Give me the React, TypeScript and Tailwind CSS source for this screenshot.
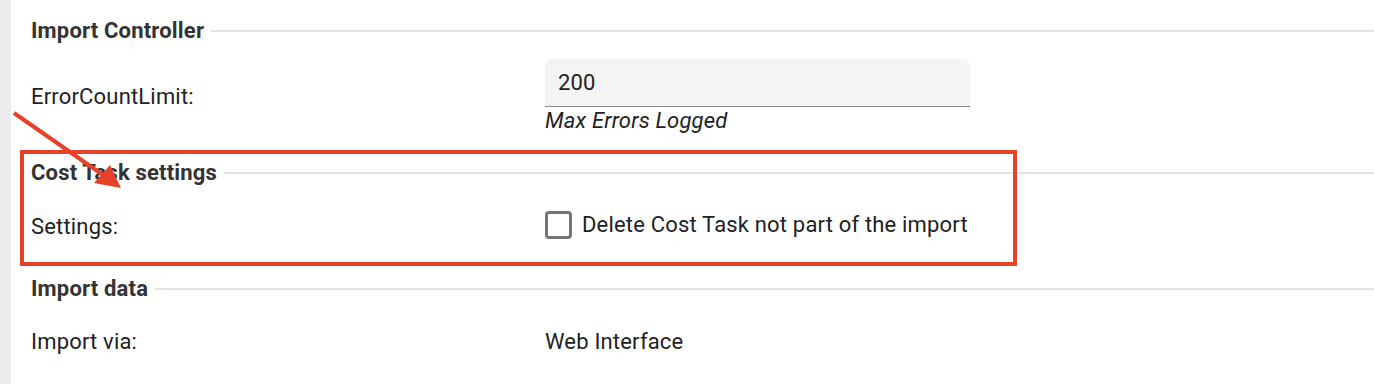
import React from 'react';

const SectionHeading = ({ title, className = '' }: { title: string; className?: string }) => (
  <div className={`flex items-center ${className}`}>
    <span className="text-[22px] leading-[28px] font-bold text-[#333333] whitespace-nowrap">{title}</span>
    <div className="flex-1 h-[2px] bg-[#e3e3e3] ml-[7px]" />
  </div>
);

const App = () => {
  return (
    <div
      className="relative flex w-full h-[384px] bg-white overflow-hidden tracking-[0.18px]"
      style={{ fontFamily: 'Roboto, "Liberation Sans", sans-serif' }}
    >
      {/* left gutter */}
      <div className="w-[11px] bg-[#ececec] shrink-0" />

      <div className="flex-1 pl-[20px] pt-[17px] text-[#222222]">
        <SectionHeading title="Import Controller" />

        {/* ErrorCountLimit */}
        <div className="grid grid-cols-[514px_1fr]">
          <div className="mt-[38px] text-[22px] leading-[28px]">ErrorCountLimit:</div>
          <div className="mt-[14px]">
            <div className="w-[425px] h-[48px] bg-[#f4f4f4] rounded-t-[6px] border-b border-[#8a8a8a] flex items-center px-[13px] text-[22px]">
              200
            </div>
            <div className="mt-[2px] text-[22px] leading-[24px] italic">Max Errors Logged</div>
          </div>
        </div>

        <SectionHeading title="Cost Task settings" className="mt-[26px]" />

        {/* Settings */}
        <div className="grid grid-cols-[514px_1fr] mt-[22px] items-center">
          <div className="text-[22px] leading-[28px] pt-[4px]">Settings:</div>
          <label className="flex items-center">
            <span className="w-[27px] h-[28px] border-[3px] border-[#767676] rounded-[4px] bg-white" />
            <span className="ml-[10px] text-[22px] leading-[28px]">Delete Cost Task not part of the import</span>
          </label>
        </div>

        <SectionHeading title="Import data" className="mt-[34px]" />

        {/* Import via */}
        <div className="grid grid-cols-[514px_1fr] mt-[25px]">
          <div className="text-[22px] leading-[28px]">Import via:</div>
          <div className="text-[22px] leading-[28px]">Web Interface</div>
        </div>
      </div>

      {/* annotation: highlight box */}
      <div className="absolute left-[20px] top-[150px] w-[997px] h-[116px] border-4 border-[#e8412b] pointer-events-none" />

      {/* annotation: arrow */}
      <svg className="absolute left-0 top-0 pointer-events-none" width="200" height="220" viewBox="0 0 200 220">
        <line x1="14" y1="113" x2="103" y2="175" stroke="#e8412b" strokeWidth="4" />
        <polygon points="121,188 94,183 110,165" fill="#e8412b" />
      </svg>
    </div>
  );
};

export default App;
